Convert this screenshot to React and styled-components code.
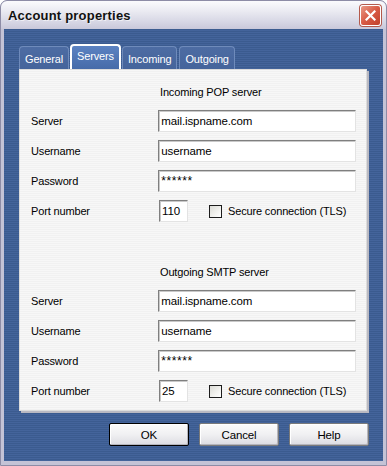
import React from 'react';
import styled, { createGlobalStyle } from 'styled-components';

const GlobalStyle = createGlobalStyle`
  html, body {
    margin: 0;
    padding: 0;
    background: #ffffff;
  }
  body {
    font-family: "Liberation Sans", Arial, sans-serif;
    font-size: 11px;
    letter-spacing: -0.15px;
  }
`;

const Window = styled.div`
  box-sizing: border-box;
  width: 387px;
  height: 466px;
  display: flex;
  flex-direction: column;
  border: 1px solid #8d8ca6;
  border-radius: 7px 7px 0 0;
  background: #c4c3d6;
  padding: 0 3px 4px 3px;
  overflow: hidden;
`;

const TitleBar = styled.div`
  height: 28px;
  margin: 0 -3px;
  padding: 0 5px 0 7px;
  display: flex;
  align-items: center;
  justify-content: space-between;
  background: linear-gradient(#fbfbfd 0%, #ebebf2 35%, #d9d9e6 70%, #c9c8da 100%);
  border-radius: 6px 6px 0 0;
`;

const Title = styled.span`
  font-family: "Liberation Sans", Arial, sans-serif;
  font-weight: bold;
  font-size: 13px;
  color: #111111;
  letter-spacing: 0.2px;
  text-shadow: 1px 1px 0 rgba(255, 255, 255, 0.6);
`;

const CloseButton = styled.div`
  box-sizing: border-box;
  width: 21px;
  height: 21px;
  border: 1px solid #ffffff;
  border-radius: 3px;
  background: linear-gradient(135deg, #e89a86 0%, #d85a44 50%, #c1412c 100%);
  box-shadow: 0 0 0 1px #b45a4c;
  display: flex;
  align-items: center;
  justify-content: center;
`;

const Client = styled.div`
  flex: 1;
  display: flex;
  flex-direction: column;
  padding: 15px 14px 14px 15px;
  background: repeating-linear-gradient(#3b5b8f 0 1px, #44649b 1px 2px);
`;

const TabStrip = styled.div`
  height: 25px;
  display: flex;
  align-items: flex-end;
  gap: 2px;
`;

const Tab = styled.div`
  box-sizing: border-box;
  height: ${p => (p.$active ? '25px' : '23px')};
  padding: 0 ${p => (p.$active ? '5px' : '5px')};
  margin: ${p => (p.$active ? '0 -1px' : '0')};
  display: flex;
  align-items: ${p => (p.$active ? 'flex-start' : 'center')};
  padding-top: ${p => (p.$active ? '4px' : '2px')};
  color: #ffffff;
  font-size: 11px;
  border-radius: 4px 4px 0 0;
  border: ${p => (p.$active ? '2px solid #ffffff' : '1px solid #6f8bbb')};
  border-bottom: none;
  background: ${p =>
    p.$active
      ? 'linear-gradient(#5b82c2, #466ba9)'
      : 'linear-gradient(#4d6ca3, #45649b)'};
`;

const Panel = styled.div`
  box-sizing: border-box;
  height: 342px;
  margin-right: 2px;
  padding: 15px 10px 10px 11px;
  display: flex;
  flex-direction: column;
  gap: 43px;
  border: 1px solid #dcdcdc;
  background: repeating-linear-gradient(#f7f7f7 0 1px, #f1f1f1 1px 2px);
  box-shadow: 2px 2px 0 #b9b9c2;
`;

const Section = styled.div`
  display: flex;
  flex-direction: column;
  gap: 8px;
`;

const Heading = styled.div`
  height: 14px;
  line-height: 14px;
  margin-left: 129px;
  margin-bottom: 3px;
  color: #000000;
`;

const Row = styled.div`
  height: 22px;
  display: flex;
  align-items: center;
`;

const Label = styled.span`
  width: 128px;
  color: #000000;
`;

const Field = styled.div`
  box-sizing: border-box;
  width: ${p => p.$width || 199}px;
  height: 22px;
  padding: 0 2px;
  display: flex;
  align-items: center;
  background: #ffffff;
  border-style: solid;
  border-width: 1px;
  border-color: #7f7f7f #e3e3e3 #e3e3e3 #7f7f7f;
  box-shadow: inset 1px 1px 0 #c9c9c9;
  color: #000000;
  font-size: ${p => (p.$secret ? '12px' : '11.5px')};
  letter-spacing: ${p => (p.$secret ? '0.6px' : '-0.1px')};
  white-space: nowrap;
`;

const CheckWrap = styled.label`
  display: flex;
  align-items: center;
  gap: 6px;
  margin-left: 21px;
  color: #000000;
`;

const CheckBox = styled.span`
  box-sizing: border-box;
  width: 13px;
  height: 13px;
  border: 1px solid #1c1c1c;
  background: linear-gradient(135deg, #dcdcd7 0%, #f2f2ef 60%, #ffffff 100%);
`;

const ButtonRow = styled.div`
  margin-top: 12px;
  display: flex;
  justify-content: flex-end;
  gap: 10px;
`;

const Button = styled.div`
  box-sizing: border-box;
  width: 80px;
  height: 23px;
  display: flex;
  align-items: center;
  justify-content: center;
  border: 1px solid ${p => (p.$default ? '#000000' : '#7a7a7a')};
  border-radius: 2px;
  background: linear-gradient(#fbfbfb 0%, #f0f0f2 50%, #dcdce2 100%);
  box-shadow: inset -1px -1px 0 #b5b5bd, inset 1px 1px 0 #ffffff;
  color: #000000;
  font-size: 11.5px;
`;

const CloseIcon = () => (
  <svg width="11" height="11" viewBox="0 0 11 11">
    <path d="M1.5 1.5 L9.5 9.5 M9.5 1.5 L1.5 9.5" stroke="#ffffff" strokeWidth="2.2" strokeLinecap="square" />
  </svg>
);

const ServerGroup = ({ title, port }) => (
  <Section>
    <Heading>{title}</Heading>
    <Row>
      <Label>Server</Label>
      <Field>mail.ispname.com</Field>
    </Row>
    <Row>
      <Label>Username</Label>
      <Field>username</Field>
    </Row>
    <Row>
      <Label>Password</Label>
      <Field $secret>******</Field>
    </Row>
    <Row>
      <Label>Port number</Label>
      <Field $width={29}>{port}</Field>
      <CheckWrap>
        <CheckBox />
        Secure connection (TLS)
      </CheckWrap>
    </Row>
  </Section>
);

export default function App() {
  return (
    <>
      <GlobalStyle />
      <Window>
        <TitleBar>
          <Title>Account properties</Title>
          <CloseButton><CloseIcon /></CloseButton>
        </TitleBar>
        <Client>
          <TabStrip>
            <Tab>General</Tab>
            <Tab $active>Servers</Tab>
            <Tab>Incoming</Tab>
            <Tab>Outgoing</Tab>
          </TabStrip>
          <Panel>
            <ServerGroup title="Incoming POP server" port="110" />
            <ServerGroup title="Outgoing SMTP server" port="25" />
          </Panel>
          <ButtonRow>
            <Button $default>OK</Button>
            <Button>Cancel</Button>
            <Button>Help</Button>
          </ButtonRow>
        </Client>
      </Window>
    </>
  );
}
